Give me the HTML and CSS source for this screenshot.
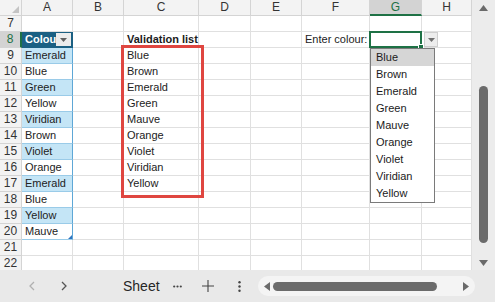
FILE: index.html
```html
<!DOCTYPE html>
<html lang="en">
<head>
    <meta charset="UTF-8">
    <title>Validation list</title>
    <link rel="stylesheet" href="styles.css">
</head>
<body>
<div class="app">
    <div class="main">
        <div class="sheet">
            <div class="grid">
                <div class="corner"></div>
                <div class="ch">A</div><div class="ch">B</div><div class="ch">C</div><div class="ch">D</div>
                <div class="ch">E</div><div class="ch">F</div><div class="ch on">G</div><div class="ch">H</div>

                <div class="rh">7</div>
                <div class="c tcol"></div><div class="c"></div><div class="c"></div><div class="c"></div><div class="c"></div><div class="c"></div><div class="c"></div><div class="c"></div>

                <div class="rh on">8</div>
                <div class="c thead">Colour<span class="filter"><svg width="7" height="4" viewBox="0 0 7 4"><path d="M0 0h7L3.5 4z" fill="#606060"/></svg></span></div>
                <div class="c"></div><div class="c bold">Validation list</div><div class="c"></div><div class="c"></div><div class="c right">Enter colour:</div><div class="c sel"></div><div class="c"></div>

                <div class="rh">9</div>
                <div class="c t band">Emerald</div><div class="c"></div><div class="c">Blue</div><div class="c"></div><div class="c"></div><div class="c"></div><div class="c"></div><div class="c"></div>

                <div class="rh">10</div>
                <div class="c t">Blue</div><div class="c"></div><div class="c">Brown</div><div class="c"></div><div class="c"></div><div class="c"></div><div class="c"></div><div class="c"></div>

                <div class="rh">11</div>
                <div class="c t band">Green</div><div class="c"></div><div class="c">Emerald</div><div class="c"></div><div class="c"></div><div class="c"></div><div class="c"></div><div class="c"></div>

                <div class="rh">12</div>
                <div class="c t">Yellow</div><div class="c"></div><div class="c">Green</div><div class="c"></div><div class="c"></div><div class="c"></div><div class="c"></div><div class="c"></div>

                <div class="rh">13</div>
                <div class="c t band">Viridian</div><div class="c"></div><div class="c">Mauve</div><div class="c"></div><div class="c"></div><div class="c"></div><div class="c"></div><div class="c"></div>

                <div class="rh">14</div>
                <div class="c t">Brown</div><div class="c"></div><div class="c">Orange</div><div class="c"></div><div class="c"></div><div class="c"></div><div class="c"></div><div class="c"></div>

                <div class="rh">15</div>
                <div class="c t band">Violet</div><div class="c"></div><div class="c">Violet</div><div class="c"></div><div class="c"></div><div class="c"></div><div class="c"></div><div class="c"></div>

                <div class="rh">16</div>
                <div class="c t">Orange</div><div class="c"></div><div class="c">Viridian</div><div class="c"></div><div class="c"></div><div class="c"></div><div class="c"></div><div class="c"></div>

                <div class="rh">17</div>
                <div class="c t band">Emerald</div><div class="c"></div><div class="c">Yellow</div><div class="c"></div><div class="c"></div><div class="c"></div><div class="c"></div><div class="c"></div>

                <div class="rh">18</div>
                <div class="c t">Blue</div><div class="c"></div><div class="c"></div><div class="c"></div><div class="c"></div><div class="c"></div><div class="c"></div><div class="c"></div>

                <div class="rh">19</div>
                <div class="c t band">Yellow</div><div class="c"></div><div class="c"></div><div class="c"></div><div class="c"></div><div class="c"></div><div class="c"></div><div class="c"></div>

                <div class="rh">20</div>
                <div class="c t last">Mauve<span class="resize"></span></div><div class="c"></div><div class="c"></div><div class="c"></div><div class="c"></div><div class="c"></div><div class="c"></div><div class="c"></div>

                <div class="rh">21</div>
                <div class="c"></div><div class="c"></div><div class="c"></div><div class="c"></div><div class="c"></div><div class="c"></div><div class="c"></div><div class="c"></div>

                <div class="rh">22</div>
                <div class="c"></div><div class="c"></div><div class="c"></div><div class="c"></div><div class="c"></div><div class="c"></div><div class="c"></div><div class="c"></div>
            </div>

            <!-- overlays -->
            <div class="valbox"></div>
            <div class="dd-btn"><svg width="7" height="4" viewBox="0 0 7 4"><path d="M0 0h7L3.5 4z" fill="#707070"/></svg></div>
            <ul class="dropdown">
                <li class="hl">Blue</li>
                <li>Brown</li>
                <li>Emerald</li>
                <li>Green</li>
                <li>Mauve</li>
                <li>Orange</li>
                <li>Violet</li>
                <li>Viridian</li>
                <li>Yellow</li>
            </ul>
        </div>
        <div class="vscroll">
            <svg class="arrow" width="9" height="6" viewBox="0 0 9 6"><path d="M4.5 0L9 6H0z" fill="#6a6a6a"/></svg>
            <div class="vtrack"><div class="vthumb"></div></div>
            <svg class="arrow" width="9" height="6" viewBox="0 0 9 6"><path d="M0 0h9L4.5 6z" fill="#6a6a6a"/></svg>
        </div>
    </div>
    <div class="tabs">
        <span class="nav dim"><svg width="6" height="10" viewBox="0 0 6 10"><path d="M5 1L1 5l4 4" fill="none" stroke="#b0b0b0" stroke-width="1.3"/></svg></span>
        <span class="nav"><svg width="6" height="10" viewBox="0 0 6 10"><path d="M1 1l4 4-4 4" fill="none" stroke="#555" stroke-width="1.3"/></svg></span>
        <span class="sheet-name">Sheet</span>
        <span class="tool"><svg width="9" height="3" viewBox="0 0 9 3"><circle cx="1.2" cy="1.5" r="1.1" fill="#444"/><circle cx="4.5" cy="1.5" r="1.1" fill="#444"/><circle cx="7.8" cy="1.5" r="1.1" fill="#444"/></svg></span>
        <span class="tool"><svg width="12" height="12" viewBox="0 0 12 12"><path d="M6 0v12M0 6h12" stroke="#444" stroke-width="1.1"/></svg></span>
        <span class="tool"><svg width="3" height="11" viewBox="0 0 3 11"><circle cx="1.5" cy="1.3" r="1.2" fill="#444"/><circle cx="1.5" cy="5.5" r="1.2" fill="#444"/><circle cx="1.5" cy="9.7" r="1.2" fill="#444"/></svg></span>
        <div class="hscroll">
            <svg width="6" height="9" viewBox="0 0 6 9"><path d="M0 4.5L6 0v9z" fill="#6a6a6a"/></svg>
            <div class="hthumb"></div>
            <svg width="6" height="9" viewBox="0 0 6 9"><path d="M6 4.5L0 0v9z" fill="#6a6a6a"/></svg>
        </div>
    </div>
</div>
</body>
</html>
```

FILE: styles.css
```css
body {
    margin: 0;
    font-family: "Liberation Sans", Arial, sans-serif;
    background-color: #fff;
    color: #222;
}

.app {
    width: 495px;
    height: 302px;
    overflow: hidden;
    display: flex;
    flex-direction: column;
}

.main {
    display: flex;
    height: 270px;
}

.sheet {
    position: relative;
    width: 472px;
    height: 270px;
    overflow: hidden;
}

.grid {
    display: grid;
    grid-template-columns: 22px 51px 51px 75px 52px 51px 68px 52px 50px;
    grid-auto-rows: 16px;
    font-size: 11px;
}

.corner,
.ch,
.rh {
    background-color: #f3f3f3;
    color: #333;
    box-sizing: border-box;
    border-right: 1px solid #d4d4d4;
    border-bottom: 1px solid #d4d4d4;
}

.corner {
    position: relative;
}

.corner::after {
    content: "";
    position: absolute;
    right: 2px;
    bottom: 2px;
    border-left: 7px solid transparent;
    border-bottom: 7px solid #c4c4c4;
}

.ch {
    text-align: center;
    line-height: 15px;
    font-size: 12px;
}

.ch.on {
    background-color: #d3d3d3;
    color: #1e7145;
    border-bottom: 2px solid #1e7145;
}

.rh {
    text-align: center;
    line-height: 15px;
    font-size: 12px;
}

.rh.on {
    background-color: #d3d3d3;
    color: #1e7145;
    border-right: 2px solid #1e7145;
}

.c {
    position: relative;
    box-sizing: border-box;
    border-right: 1px solid #e0e0e0;
    border-bottom: 1px solid #e0e0e0;
    padding-left: 3px;
    line-height: 15px;
    white-space: nowrap;
    overflow: hidden;
}

.bold {
    font-weight: bold;
    color: #1b1b1b;
    overflow: visible;
}

.right {
    text-align: right;
    padding-right: 3px;
}

.sel {
    overflow: visible;
    z-index: 2;
}

.sel::before {
    content: "";
    position: absolute;
    left: -1px;
    top: -1px;
    right: -1px;
    bottom: -1px;
    border: 2px solid #1e7145;
}

.sel::after {
    content: "";
    position: absolute;
    right: -3px;
    bottom: -3px;
    width: 4px;
    height: 4px;
    background-color: #1e7145;
    border: 1px solid #fff;
}

/* table in column A */
.thead {
    background-color: #1b6083;
    color: #fff;
    font-weight: bold;
    border-right-color: #1b6083;
    border-bottom-color: #1b6083;
    overflow: hidden;
}

.filter {
    position: absolute;
    right: 1px;
    top: 1px;
    width: 15px;
    height: 13px;
    background-color: #ececec;
    display: flex;
    align-items: center;
    justify-content: center;
}

.t {
    border-bottom-color: #9acbe8;
    border-right: 1px solid #5ea7d6;
}

.band {
    background-color: #c4e5f6;
}

.last {
    overflow: visible;
}

.resize {
    position: absolute;
    right: 0;
    bottom: 0;
    border-left: 4px solid transparent;
    border-bottom: 4px solid #2f74c0;
}

/* overlays */
.valbox {
    position: absolute;
    left: 121px;
    top: 45px;
    width: 77px;
    height: 147px;
    border: 3px solid #df4640;
}

.dd-btn {
    position: absolute;
    left: 424px;
    top: 32px;
    width: 14px;
    height: 15px;
    box-sizing: border-box;
    background-color: #ededed;
    border: 1px solid #cfcfcf;
    display: flex;
    align-items: center;
    justify-content: center;
}

.dropdown {
    position: absolute;
    left: 370px;
    top: 48px;
    width: 65px;
    height: 155px;
    box-sizing: border-box;
    margin: 0;
    padding: 0;
    list-style: none;
    background-color: #fff;
    border: 1px solid #7a7a7a;
    font-size: 11px;
    z-index: 3;
}

.dropdown li {
    height: 17px;
    line-height: 17px;
    padding-left: 5px;
    color: #1b1b1b;
}

.dropdown li.hl {
    background-color: #d6d6d6;
}

/* scroll bars */
.vscroll {
    width: 23px;
    background-color: #ececec;
    display: flex;
    flex-direction: column;
    align-items: center;
    padding-top: 5px;
    box-sizing: border-box;
}

.vtrack {
    flex: 1;
    width: 100%;
    padding-top: 75px;
    padding-bottom: 14px;
    box-sizing: border-box;
    display: flex;
    justify-content: center;
}

.vthumb {
    width: 9px;
    height: 157px;
    border-radius: 5px;
    background-color: #6b6b6b;
}

.vscroll .arrow:last-child {
    margin-bottom: 4px;
}

.tabs {
    height: 32px;
    background-color: #e9e9e9;
    display: flex;
    align-items: center;
    padding-left: 16px;
}

.nav {
    width: 32px;
    display: flex;
    justify-content: center;
}

.sheet-name {
    margin-left: 43px;
    font-size: 14px;
    color: #262626;
}

.tool {
    width: 18px;
    height: 18px;
    display: flex;
    align-items: center;
    justify-content: center;
}

.tool:nth-of-type(4) {
    margin-left: 9px;
}

.tool:nth-of-type(5) {
    margin-left: 12px;
}

.tool:nth-of-type(6) {
    margin-left: 14px;
}

.hscroll {
    margin-left: 9px;
    width: 217px;
    height: 20px;
    border-radius: 10px;
    background-color: #f4f4f4;
    display: flex;
    align-items: center;
    padding: 0 6px;
    box-sizing: border-box;
    gap: 3px;
}

.hthumb {
    width: 164px;
    height: 9px;
    border-radius: 5px;
    background-color: #6b6b6b;
    margin-right: auto;
}
```
